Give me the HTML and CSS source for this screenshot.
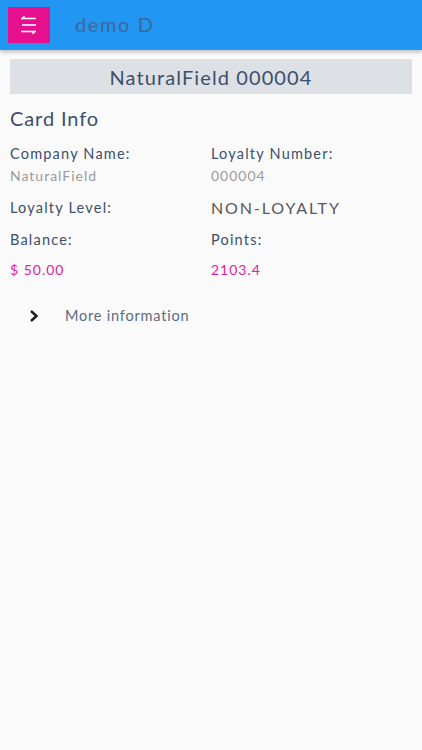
FILE: index.html
```html
<!DOCTYPE html>
<html>
<head>
<meta charset="utf-8">
<link rel="stylesheet" href="styles.css">
</head>
<body>
<header class="appbar">
  <button class="menu-btn" aria-label="menu">
    <svg width="20" height="20" viewBox="0 0 20 20">
      <path d="M3 3.5 H16 M3 3.5 L5 1.8" stroke="#fff" stroke-width="1.6" fill="none" stroke-linecap="square"/>
      <path d="M3 10 H17" stroke="#fff" stroke-width="1.6" fill="none"/>
      <path d="M3 16.5 H16 M16 16.5 L14 18.2" stroke="#fff" stroke-width="1.6" fill="none" stroke-linecap="square"/>
    </svg>
  </button>
  <span class="app-title">demo D</span>
</header>
<main class="content">
  <div class="card-title">NaturalField 000004</div>
  <h2 class="section-title">Card Info</h2>
  <div class="grid">
    <div class="cell">
      <div class="label">Company Name:</div>
      <div class="value muted">NaturalField</div>
    </div>
    <div class="cell">
      <div class="label">Loyalty Number:</div>
      <div class="value muted">000004</div>
    </div>
    <div class="cell row">
      <div class="label">Loyalty Level:</div>
    </div>
    <div class="cell row">
      <div class="level">NON-LOYALTY</div>
    </div>
    <div class="cell">
      <div class="label">Balance:</div>
      <div class="value accent">$ 50.00</div>
    </div>
    <div class="cell">
      <div class="label">Points:</div>
      <div class="value accent">2103.4</div>
    </div>
  </div>
  <div class="more">
    <svg class="chev" width="12" height="14" viewBox="0 0 12 14">
      <path d="M3 2 L8.5 7 L3 12" stroke="#1b1b1b" stroke-width="2.4" fill="none"/>
    </svg>
    <span>More information</span>
  </div>
</main>
</body>
</html>
```
FILE: styles.css
```css
html, body {
  margin: 0;
  padding: 0;
  background: #fafafa;
  font-family: "Lato", "Open Sans", sans-serif;
}
.appbar {
  height: 50px;
  background: #2196f3;
  display: flex;
  align-items: center;
  box-shadow: 0 2px 4px rgba(0,0,0,0.25);
  position: relative;
}
.menu-btn {
  margin-left: 8px;
  width: 42px;
  height: 36px;
  border: none;
  background: #e6108f;
  display: flex;
  align-items: center;
  justify-content: center;
  padding: 0;
  margin-top: -1px;
}
.app-title {
  margin-left: 25px;
  margin-top: -3px;
  font-size: 20px;
  color: #3f679a;
  letter-spacing: 1.6px;
}
.content {
  padding: 9px 10px 0 10px;
}
.card-title {
  background: #dde0e5;
  height: 35px;
  display: flex;
  align-items: center;
  justify-content: center;
  font-size: 20px;
  color: #3c4f6c;
  letter-spacing: 1.1px;
}
.section-title {
  margin: 12px 0 0 0;
  font-weight: normal;
  font-size: 20px;
  color: #3c4f6c;
  letter-spacing: 0.9px;
}
.grid {
  display: grid;
  grid-template-columns: 201px 1fr;
  margin-top: 15px;
}
.cell {
  display: flex;
  flex-direction: column;
}
.label {
  font-size: 14.5px;
  color: #3c4f6c;
  height: 18px;
  line-height: 18px;
  letter-spacing: 1.2px;
}
.value {
  font-size: 14px;
  margin-top: 4px;
  line-height: 18px;
  letter-spacing: 1px;
}
.muted { color: #9a9a9a; }
.accent { color: #e0239c; margin-top: 12px; }
.row {
  margin-top: 14px;
  margin-bottom: 14px;
  height: 18px;
  justify-content: center;
}
.level {
  font-size: 16px;
  color: #585858;
  letter-spacing: 1.9px;
  line-height: 18px;
}
.more {
  display: flex;
  align-items: center;
  margin-top: 28px;
  margin-left: 18px;
  font-size: 14.5px;
  color: #5a6a85;
  letter-spacing: 0.8px;
}
.chev { margin-right: 25px; }
```
